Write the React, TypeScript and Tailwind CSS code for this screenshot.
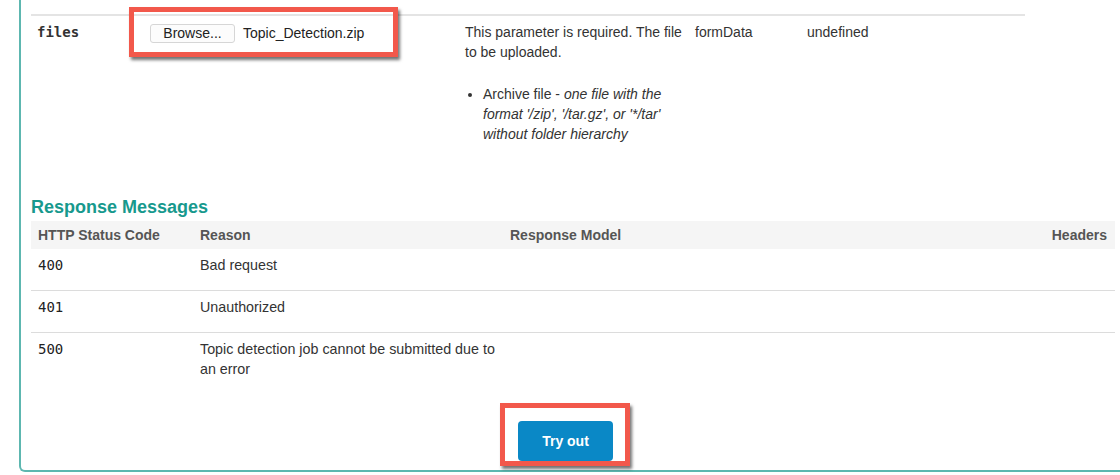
import React from 'react';

const sans = "font-['Liberation_Sans',Arial,sans-serif]";
const mono = "font-['DejaVu_Sans_Mono',Menlo,monospace]";

const responses = [
  { code: '400', reason: ['Bad request'] },
  { code: '401', reason: ['Unauthorized'] },
  { code: '500', reason: ['Topic detection job cannot be submitted due to', 'an error'] },
];

function Callout({ className }: { className: string }) {
  // red annotation frame drawn over the UI
  return (
    <div
      aria-hidden="true"
      className={`pointer-events-none absolute border-[5px] border-[#f2584b] shadow-[2px_3px_3px_rgba(0,0,0,0.55)] ${className}`}
    />
  );
}

export default function App() {
  return (
    <div className={`w-full h-[475px] bg-white text-[14px] text-[#333] ${sans}`}>
      <div className="ml-[19px] h-[472px] border-l-2 border-b-2 border-[#5db7b0] rounded-bl-[6px] pl-[10px] pt-[14px]">
        {/* parameters */}
        <div className="w-[994px] border-t-2 border-[#e4e4e4]">
          <div className="grid grid-cols-[113px_315px_230px_112px_224px] leading-[20px]">
            <div className={`px-[6px] pt-[6px] font-bold ${mono}`}>files</div>
            <div className="relative px-[6px] pt-[6px]">
              <Callout className="-left-[15px] -top-[9px] w-[269px] h-[50px]" />
              <div className="flex items-center gap-2 pt-[1px]">
                <span className="flex h-[19px] w-[85px] items-center justify-center rounded-[3px] border border-[#d6d6d6] bg-[#fcfcfc] text-[14px] text-[#222]">
                  Browse...
                </span>
                <span className="text-[#222]">Topic_Detection.zip</span>
              </div>
            </div>
            <div className="px-[6px] pt-[6px]">
              <p>
                This parameter is required. The file
                <br />
                to be uploaded.
              </p>
              <ul className="mt-[22px] list-disc pl-[18px]">
                <li>
                  Archive file - <em>one file with the</em>
                  <br />
                  <em>format '/zip', '/tar.gz', or '*/tar'</em>
                  <br />
                  <em>without folder hierarchy</em>
                </li>
              </ul>
            </div>
            <div className="px-[6px] pt-[6px]">formData</div>
            <div className="px-[6px] pt-[6px]">undefined</div>
          </div>
        </div>

        {/* responses */}
        <h4 className="mt-[52px] text-[18px] leading-[22px] font-bold text-[#17998d]">Response Messages</h4>
        <div className="mt-[3px] w-[1084px]">
          <div className="grid h-[28px] grid-cols-[162px_310px_1fr_auto] items-center bg-[#f5f5f5] font-bold text-[#555]">
            <div className="px-[7px]">HTTP Status Code</div>
            <div className="px-[7px]">Reason</div>
            <div className="px-[7px]">Response Model</div>
            <div className="px-[8px] text-right">Headers</div>
          </div>
          {responses.map((r, i) => (
            <div
              key={r.code}
              className={`grid grid-cols-[162px_310px_1fr_auto] pt-[6px] pb-[15px] leading-[20px] ${
                i < responses.length - 1 ? 'border-b border-[#dcdcdc]' : ''
              }`}
            >
              <div className={`px-[7px] text-[14px] text-[#222] ${mono}`}>{r.code}</div>
              <div className="px-[7px] text-[14.3px]">
                {r.reason.map((line, j) => (
                  <React.Fragment key={j}>
                    {j > 0 && <br />}
                    {line}
                  </React.Fragment>
                ))}
              </div>
              <div />
              <div />
            </div>
          ))}
        </div>

        <div className="mt-[27px] flex pl-[487px]">
          <div className="relative">
            <Callout className="-left-[18px] -top-[18px] -right-[17px] -bottom-[5px]" />
            <button className="h-[40px] w-[95px] rounded-[4px] bg-[#0a88c6] text-[14px] font-bold text-white">
              Try out
            </button>
          </div>
        </div>
      </div>
    </div>
  );
}
